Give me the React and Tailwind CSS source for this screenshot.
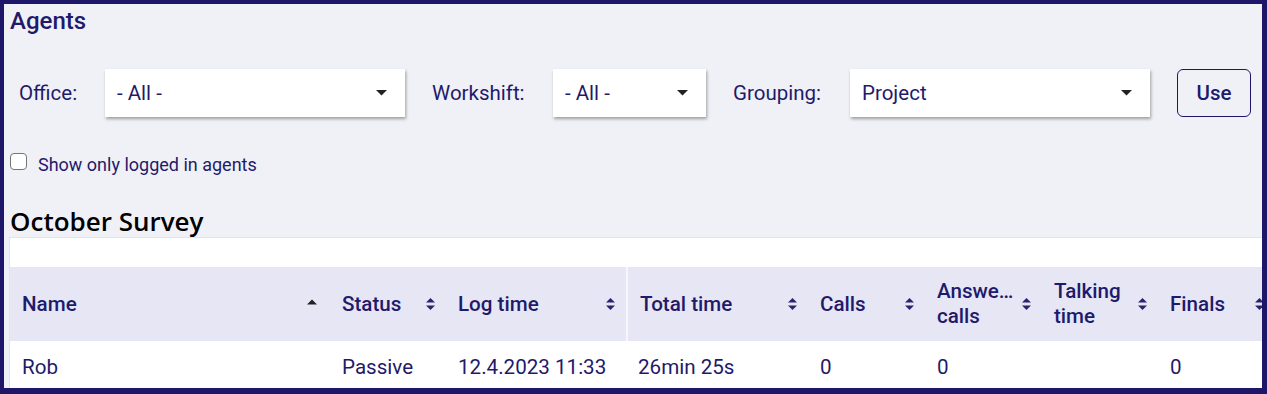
import React from 'react'

const navy = 'text-[#1f1a6b]'

function Caret() {
  return (
    <svg width="11" height="6" viewBox="0 0 11 6" className="shrink-0">
      <polygon points="0,0 11,0 5.5,5.5" fill="#222" />
    </svg>
  )
}

function SortBoth() {
  return (
    <svg width="9" height="14" viewBox="0 0 9 14" className="shrink-0">
      <polygon points="0,5.5 4.5,1 9,5.5" fill="#2a2470" />
      <polygon points="0,8.5 4.5,13 9,8.5" fill="#2a2470" />
    </svg>
  )
}

function SortUp() {
  return (
    <svg width="10" height="6" viewBox="0 0 10 6" className="shrink-0 -mt-[4px] mr-[2px]">
      <polygon points="0,5.5 5,0.5 10,5.5" fill="#222" />
    </svg>
  )
}

function Select({ value, width }) {
  return (
    <div
      className={`flex items-center justify-between h-[48px] bg-white pl-[12px] pr-[18px] shadow-[1px_2px_3px_rgba(0,0,0,0.35)] ${width}`}
    >
      <span className={`text-[20.5px] ${navy}`}>{value}</span>
      <Caret />
    </div>
  )
}

const columns = [
  { key: 'name', label: ['Name'], w: 'w-[320px]', sort: 'up' },
  { key: 'status', label: ['Status'], w: 'w-[116px]' },
  { key: 'log', label: ['Log time'], w: 'w-[180px]' },
  { key: 'total', label: ['Total time'], w: 'w-[182px]', sep: true },
  { key: 'calls', label: ['Calls'], w: 'w-[117px]' },
  { key: 'answered', label: ['Answe…', 'calls'], w: 'w-[117px]' },
  { key: 'talking', label: ['Talking', 'time'], w: 'w-[116px]' },
  { key: 'finals', label: ['Finals'], w: 'w-[117px]' },
]

const row = {
  name: 'Rob',
  status: 'Passive',
  log: '12.4.2023 11:33',
  total: '26min 25s',
  calls: '0',
  answered: '0',
  talking: '',
  finals: '0',
}

export default function App() {
  return (
    <div
      className="w-[1267px] h-[394px] overflow-hidden bg-[#f0f1f6] border-[#1e1769] border-t-4 border-l-4 border-r-[5px] border-b-[6px]"
      style={{ fontFamily: 'Roboto, "Liberation Sans", sans-serif' }}
    >
      <div className="pl-[6px] pt-[3px]">
        <h1 className={`text-[24px] leading-[28px] font-medium ${navy}`}>Agents</h1>

        {/* Filters */}
        <div className="mt-[34px] flex items-center gap-[27px] pl-[9px]">
          <span className={`w-[59px] text-[20.5px] ${navy}`}>Office:</span>
          <Select value="- All -" width="w-[300px]" />
          <span className={`w-[94px] text-[20.5px] ${navy}`}>Workshift:</span>
          <Select value="- All -" width="w-[153px]" />
          <span className={`w-[90px] text-[20.5px] ${navy}`}>Grouping:</span>
          <Select value="Project" width="w-[300px]" />
          <button
            className={`w-[74px] h-[48px] rounded-md border border-[#1e1769] text-[20.5px] font-medium ${navy}`}
          >
            Use
          </button>
        </div>

        {/* Checkbox */}
        <label className="mt-[36px] flex items-start gap-[11px]">
          <span className="w-[17px] h-[17px] rounded-[4px] border-[1.5px] border-[#767676] bg-white shrink-0" />
          <span className={`mt-[2px] text-[18px] leading-[20px] ${navy}`}>Show only logged in agents</span>
        </label>

        <h2
          className="mt-[31px] text-[26px] leading-[30px] font-semibold text-black"
          style={{ fontFamily: '"Open Sans", "Noto Sans", sans-serif' }}
        >
          October Survey
        </h2>

        {/* Table */}
        <div className="mt-[1px] -ml-[1px] w-[1290px] bg-white border border-[#e3e3ec]">
          <div className="h-[29px]" />
          <div className="flex h-[74px] bg-[#e6e6f5]">
            {columns.map((c) => (
              <div
                key={c.key}
                className={`${c.w} shrink-0 flex items-center justify-between pl-[12px] pr-[11px] ${c.sep ? 'border-l-2 border-[#f6f6fc]' : ''}`}
              >
                <div className={`flex flex-col text-[20.6px] leading-[25px] font-medium ${navy}`}>
                  {c.label.map((l) => (
                    <span key={l}>{l}</span>
                  ))}
                </div>
                {c.sort === 'up' ? <SortUp /> : <SortBoth />}
              </div>
            ))}
          </div>
          <div className="flex h-[52px]">
            {columns.map((c) => (
              <div
                key={c.key}
                className={`${c.w} shrink-0 flex items-center pl-[12px] text-[20.6px] ${navy}`}
              >
                {row[c.key]}
              </div>
            ))}
          </div>
        </div>
      </div>
    </div>
  )
}
